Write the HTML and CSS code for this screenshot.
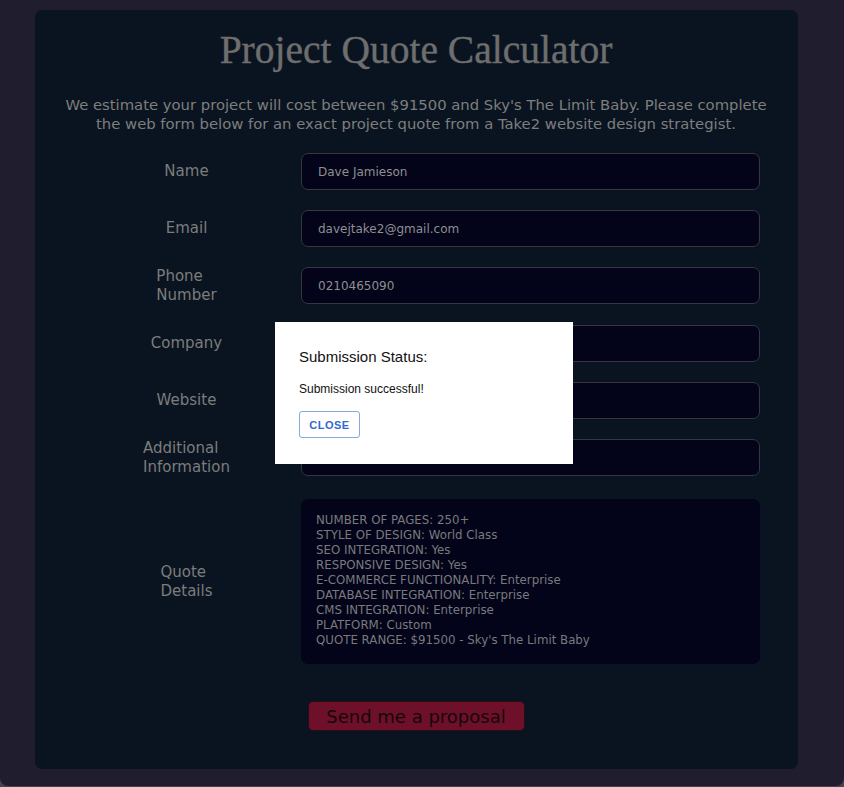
FILE: index.html
```html
<!DOCTYPE html>
<html>
<head>
<meta charset="utf-8">
<link rel="stylesheet" href="styles.css">
</head>
<body>
<div class="page">
  <main class="card">
    <h1 class="title">Project Quote Calculator</h1>
    <p class="intro">We estimate your project will cost between $91500 and Sky's The Limit Baby. Please complete the web form below for an exact project quote from a Take2 website design strategist.</p>
    <form class="form">
      <div class="label-cell"><span class="label">Name</span></div>
      <div class="field">Dave Jamieson</div>
      <div class="label-cell"><span class="label">Email</span></div>
      <div class="field">davejtake2@gmail.com</div>
      <div class="label-cell"><span class="label">Phone Number</span></div>
      <div class="field">0210465090</div>
      <div class="label-cell"><span class="label">Company</span></div>
      <div class="field"></div>
      <div class="label-cell"><span class="label">Website</span></div>
      <div class="field"></div>
      <div class="label-cell"><span class="label">Additional Information</span></div>
      <div class="field"></div>
      <div class="label-cell quote-label"><span class="label">Quote Details</span></div>
      <div class="details">NUMBER OF PAGES: 250+<br>STYLE OF DESIGN: World Class<br>SEO INTEGRATION: Yes<br>RESPONSIVE DESIGN: Yes<br>E-COMMERCE FUNCTIONALITY: Enterprise<br>DATABASE INTEGRATION: Enterprise<br>CMS INTEGRATION: Enterprise<br>PLATFORM: Custom<br>QUOTE RANGE: $91500 - Sky's The Limit Baby</div>
    </form>
    <div class="actions"><button class="submit" type="button">Send me a proposal</button></div>
  </main>
  <div class="modal">
    <h2 class="modal-title">Submission Status:</h2>
    <p class="modal-text">Submission successful!</p>
    <button class="close" type="button">CLOSE</button>
  </div>
</div>
</body>
</html>
```
FILE: styles.css
```css
html {
  background: #45454f;
}
body {
  margin: 0;
  font-family: "DejaVu Sans", sans-serif;
}
.page {
  position: relative;
  height: 786px;
  background: #1f1d2e;
  border-radius: 0 0 8px 8px;
  padding: 10px 46px 0 35px;
  box-sizing: border-box;
}
.card {
  background: #0a1420;
  border-radius: 7px;
  height: 759px;
  box-sizing: border-box;
  padding: 20px 38px 0 37px;
  display: flex;
  flex-direction: column;
}
.title {
  margin: 0;
  text-align: center;
  font-family: "Liberation Serif", serif;
  font-weight: normal;
  font-size: 39.5px;
  line-height: 40px;
  color: #6e6e6e;
  -webkit-text-stroke: 0.4px #6e6e6e;
}
.intro {
  margin: 25px -10px 0 -10px;
  text-align: center;
  font-size: 14.8px;
  line-height: 19px;
  color: #7e7e7e;
}
.form {
  margin-top: 20px;
  display: grid;
  grid-template-columns: 229px 1fr;
  row-gap: 20px;
}
.label-cell {
  display: flex;
  align-items: center;
  justify-content: center;
}
.label {
  width: min-content;
  font-size: 15px;
  line-height: 19px;
  color: #7c7c7c;
}
.field {
  height: 37px;
  box-sizing: border-box;
  background: #03031a;
  border: 1px solid #35363f;
  border-radius: 7px;
  padding: 0 16px;
  display: flex;
  align-items: center;
  font-size: 12px;
  color: #8f8f8f;
}
.quote-label,
.details {
  margin-top: 2px;
}
.details {
  height: 165px;
  box-sizing: border-box;
  background: #03031a;
  border-radius: 7px;
  padding: 14px 15px;
  font-size: 11.8px;
  line-height: 15px;
  color: #7a7a7a;
}
.actions {
  margin-top: 37px;
  display: flex;
  justify-content: center;
}
.submit {
  width: 217px;
  height: 30px;
  background: #6e1029;
  border: 1px solid #2b0c14;
  border-radius: 5px;
  color: #14070c;
  font-family: "DejaVu Sans", sans-serif;
  font-size: 18px;
  padding: 0;
}
.modal {
  position: absolute;
  left: 275px;
  top: 322px;
  width: 298px;
  height: 142px;
  box-sizing: border-box;
  background: #ffffff;
  padding: 26px 24px 0 24px;
  font-family: "Liberation Sans", Arial, sans-serif;
}
.modal-title {
  margin: 0;
  font-size: 15px;
  font-weight: normal;
  line-height: 18px;
  color: #111111;
}
.modal-text {
  margin: 16px 0 0 0;
  font-size: 12px;
  line-height: 15px;
  color: #111111;
}
.close {
  margin-top: 14px;
  width: 61px;
  height: 27px;
  background: #ffffff;
  border: 1px solid #86a9e0;
  border-radius: 3px;
  color: #2f6ad0;
  font-family: "Liberation Sans", Arial, sans-serif;
  font-size: 11px;
  font-weight: bold;
  letter-spacing: 0.5px;
  padding: 0;
}
```
